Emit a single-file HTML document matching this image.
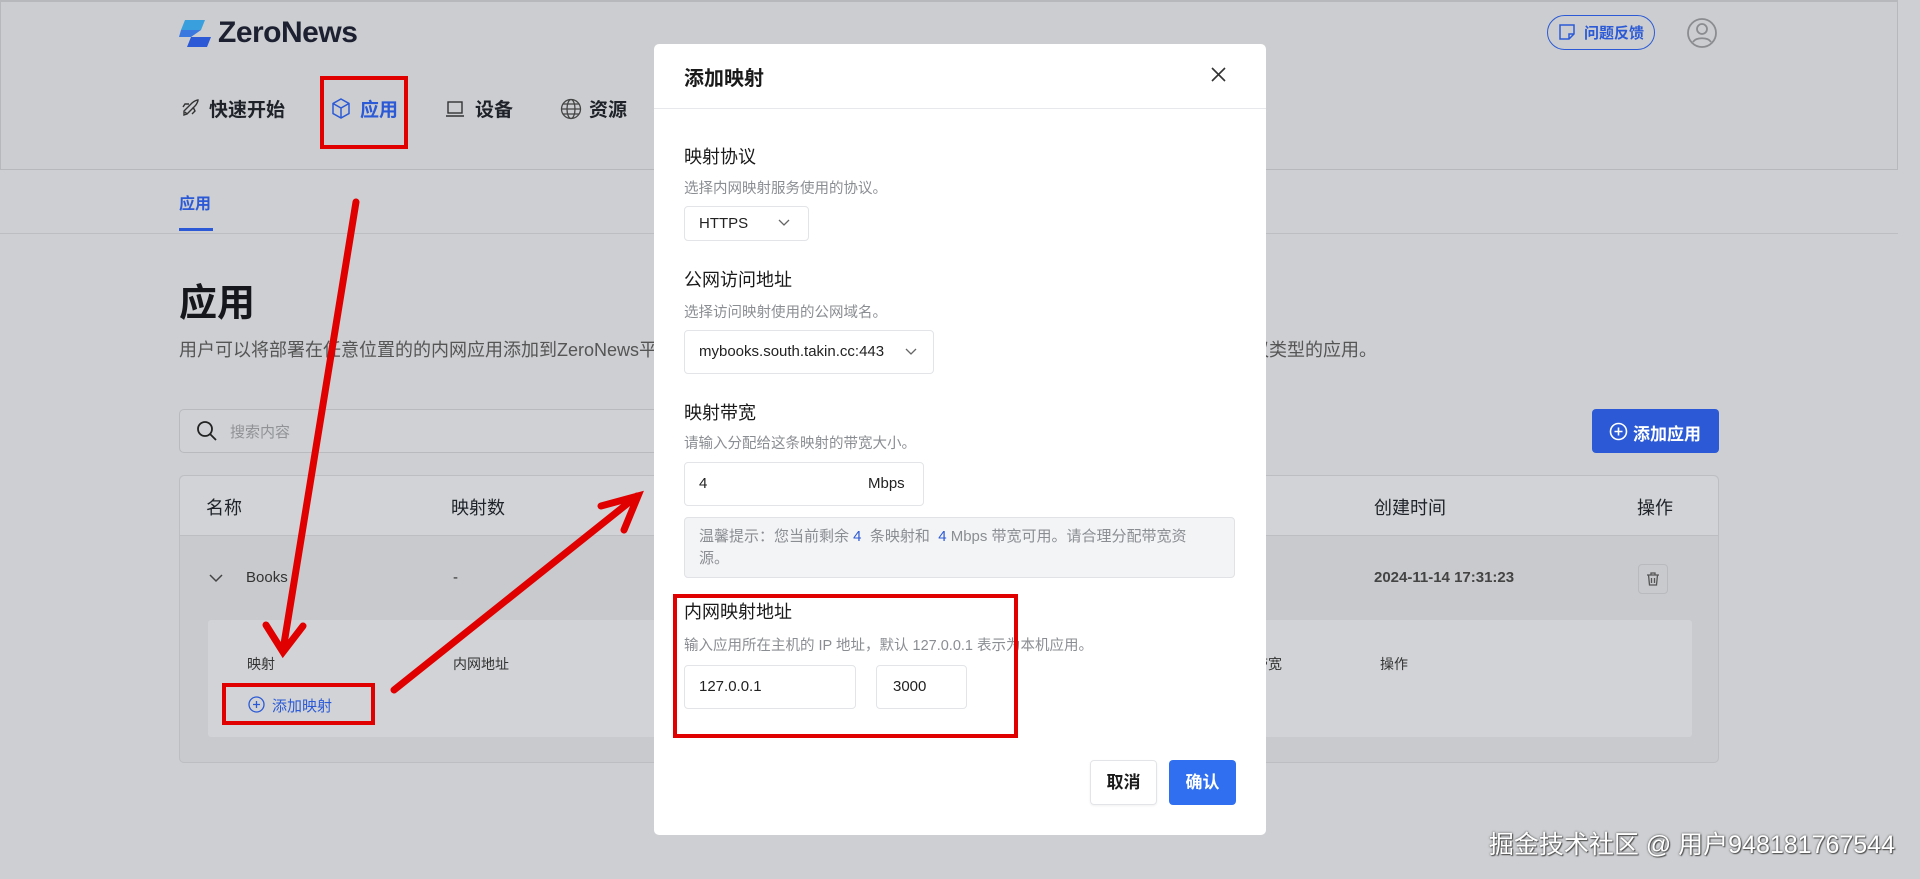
<!DOCTYPE html>
<html><head><meta charset="utf-8"><style>
*{margin:0;padding:0;box-sizing:border-box}
body{width:1920px;height:879px;overflow:hidden;position:relative;background:#cdcfd2;font-family:"Liberation Sans","Noto Sans CJK SC",sans-serif;color:#1f2329}
.a{position:absolute;white-space:nowrap}
</style></head><body>
<div class="a" style="left:0;top:0;width:1898px;height:170px;background:#cbcdd0;border:1px solid #b6b8bb;border-top:2px solid #b6b8bb"></div>
<div class="a" style="left:0;top:170px;width:1898px;height:64px;background:#cdcfd2;border-bottom:1px solid #bcbec1"></div>
<svg class="a" style="left:179px;top:20px" width="34" height="27" viewBox="0 0 34 27"><path d="M6 0h20l-4 10H2z" fill="#3aa0dd"/><path d="M12 17h20l-4 10H8z" fill="#2c5ad6"/><path d="M2 10h20l-10 7H0z" fill="#3a78e0"/></svg>
<div class="a" style="left:218px;top:16px;font-size:30px;font-weight:bold;color:#1c2030;letter-spacing:-0.5px">ZeroNews</div>
<svg class="a" style="left:181px;top:98px" width="20" height="20" viewBox="0 0 20 20" fill="none" stroke="#333" stroke-width="1.4"><path d="M3 17l3-1 8-8c2-2 3-5 3-6-1 0-4 1-6 3l-8 8z M6 16l-2-2 M12 9l2 4-3 3 M8 6l-4 0-2 3"/></svg>
<div class="a" style="left:209px;top:95px;font-size:19px;font-weight:bold">快速开始</div>
<svg class="a" style="left:331px;top:98px" width="20" height="22" viewBox="0 0 20 22" fill="none" stroke="#2c5ad6" stroke-width="1.5"><path d="M10 1l8 4.5v10L10 20l-8-4.5v-10z M2 5.5l8 4.5 8-4.5 M10 10v10"/></svg>
<div class="a" style="left:360px;top:95px;font-size:19px;font-weight:bold;color:#2c5ad6">应用</div>
<svg class="a" style="left:445px;top:100px" width="20" height="18" viewBox="0 0 20 18" fill="none" stroke="#333" stroke-width="1.4"><rect x="3" y="2" width="14" height="11"/><path d="M1 16h18"/></svg>
<div class="a" style="left:475px;top:95px;font-size:19px;font-weight:bold">设备</div>
<svg class="a" style="left:560px;top:98px" width="22" height="22" viewBox="0 0 22 22" fill="none" stroke="#444" stroke-width="1.3"><circle cx="11" cy="11" r="9.5"/><ellipse cx="11" cy="11" rx="4" ry="9.5"/><path d="M1.5 11h19M3 6h16M3 16h16"/></svg>
<div class="a" style="left:589px;top:95px;font-size:19px;font-weight:bold">资源</div>
<div class="a" style="left:320px;top:76px;width:88px;height:73px;border:4px solid #e00000"></div>
<div class="a" style="left:1547px;top:15px;width:108px;height:35px;border:1.5px solid #2c5ad6;border-radius:18px"></div>
<svg class="a" style="left:1558px;top:23px" width="18" height="18" viewBox="0 0 18 18" fill="none" stroke="#2c5ad6" stroke-width="1.5"><path d="M2 2h14v9l-5 5H2z M11 16v-5h5"/></svg>
<div class="a" style="left:1584px;top:22px;font-size:15px;font-weight:bold;color:#2c5ad6">问题反馈</div>
<svg class="a" style="left:1686px;top:17px" width="32" height="32" viewBox="0 0 32 32" fill="none" stroke="#8a8c90" stroke-width="1.8"><circle cx="16" cy="16" r="14"/><circle cx="16" cy="12" r="5"/><path d="M7 25c3-5 15-5 18 0"/></svg>
<div class="a" style="left:179px;top:190px;font-size:16px;font-weight:bold;color:#2c5ad6">应用</div>
<div class="a" style="left:179px;top:228px;width:34px;height:3px;background:#2c5ad6"></div>
<div class="a" style="left:179px;top:272px;font-size:38px;font-weight:bold;color:#15171c">应用</div>
<div class="a" style="left:179px;top:336px;font-size:18px;color:#555">用户可以将部署在任意位置的的内网应用添加到ZeroNews平台，……………………………………………………………………支持多种协议类型的应用。</div>
<div class="a" style="left:179px;top:409px;width:520px;height:44px;border:1px solid #b8babd;border-radius:5px;background:#cfd1d4"></div>
<svg class="a" style="left:196px;top:420px" width="22" height="22" viewBox="0 0 22 22" fill="none" stroke="#222" stroke-width="1.8"><circle cx="9" cy="9" r="7"/><path d="M14 14l6 6"/></svg>
<div class="a" style="left:230px;top:421px;font-size:15px;color:#909296">搜索内容</div>
<div class="a" style="left:1592px;top:409px;width:127px;height:44px;background:#2c5ad6;border-radius:4px"></div>
<svg class="a" style="left:1609px;top:422px" width="19" height="19" viewBox="0 0 19 19" fill="none" stroke="#fff" stroke-width="1.6"><circle cx="9.5" cy="9.5" r="8"/><path d="M9.5 5.5v8M5.5 9.5h8"/></svg>
<div class="a" style="left:1633px;top:420px;font-size:17px;font-weight:bold;color:#fff">添加应用</div>
<div class="a" style="left:179px;top:475px;width:1540px;height:288px;border:1px solid #bcbec1;border-radius:5px;background:#c8cacd"></div>
<div class="a" style="left:180px;top:476px;width:1538px;height:60px;background:#d1d3d6;border-bottom:1px solid #bcbec1;border-radius:5px 5px 0 0"></div>
<div class="a" style="left:206px;top:494px;font-size:18px">名称</div>
<div class="a" style="left:451px;top:494px;font-size:18px">映射数</div>
<div class="a" style="left:1374px;top:494px;font-size:18px">创建时间</div>
<div class="a" style="left:1637px;top:494px;font-size:18px">操作</div>
<svg class="a" style="left:209px;top:573px" width="14" height="10" viewBox="0 0 14 10" fill="none" stroke="#444" stroke-width="1.5"><path d="M1 2l6 6 6-6"/></svg>
<div class="a" style="left:246px;top:569px;font-size:15px;color:#333">Books</div>
<div class="a" style="left:453px;top:569px;font-size:15px;color:#333">-</div>
<div class="a" style="left:1374px;top:569px;font-size:15px;font-weight:bold;color:#444">2024-11-14 17:31:23</div>
<div class="a" style="left:1638px;top:564px;width:30px;height:30px;border:1px solid #b8babd;border-radius:4px"></div>
<svg class="a" style="left:1645px;top:571px" width="16" height="16" viewBox="0 0 16 16" fill="none" stroke="#555" stroke-width="1.3"><path d="M2 4h12M6 4V2h4v2M3.5 4l1 10h7l1-10M6.5 7v5M9.5 7v5"/></svg>
<div class="a" style="left:208px;top:620px;width:1484px;height:117px;background:#d1d3d6;border-radius:3px"></div>
<div class="a" style="left:247px;top:654px;font-size:14px;color:#333">映射</div>
<div class="a" style="left:453px;top:654px;font-size:14px;color:#333">内网地址</div>
<div class="a" style="left:1254px;top:654px;font-size:14px;color:#333">带宽</div>
<div class="a" style="left:1380px;top:654px;font-size:14px;color:#333">操作</div>
<svg class="a" style="left:248px;top:696px" width="17" height="17" viewBox="0 0 17 17" fill="none" stroke="#2c5ad6" stroke-width="1.3"><circle cx="8.5" cy="8.5" r="7.5"/><path d="M8.5 5v7M5 8.5h7"/></svg>
<div class="a" style="left:272px;top:695px;font-size:15px;color:#2c5ad6">添加映射</div>
<div class="a" style="left:222px;top:683px;width:153px;height:42px;border:4px solid #e00000"></div>
<svg class="a" style="left:0;top:0" width="1920" height="879"><g stroke="#e00000" stroke-width="7" stroke-linecap="round" fill="none"><path d="M356 202L283 650M266 625l17 27 20-26"/><path d="M394 690L637 496M601 506l37-10-14 34"/></g></svg>
<div class="a" style="left:654px;top:44px;width:612px;height:791px;background:#fff;border-radius:5px"></div>
<div class="a" style="left:654px;top:108px;width:612px;height:1px;background:#e6e8eb"></div>
<div class="a" style="left:684px;top:62px;font-size:20px;font-weight:bold;color:#1a1a1a">添加映射</div>
<svg class="a" style="left:1211px;top:67px" width="15" height="15" viewBox="0 0 15 15" stroke="#333" stroke-width="1.6"><path d="M1 1l13 13M14 1L1 14"/></svg>
<div class="a" style="left:684px;top:143px;font-size:18px;color:#1a1a1a">映射协议</div>
<div class="a" style="left:684px;top:177px;font-size:14.5px;color:#8a8d92">选择内网映射服务使用的协议。</div>
<div class="a" style="left:684px;top:206px;width:125px;height:35px;border:1px solid #e2e4e7;border-radius:4px"></div>
<div class="a" style="left:699px;top:215px;font-size:15px;color:#222">HTTPS</div>
<svg class="a" style="left:778px;top:219px" width="12" height="8" viewBox="0 0 12 8" fill="none" stroke="#666" stroke-width="1.3"><path d="M1 1l5 5 5-5"/></svg>
<div class="a" style="left:684px;top:266px;font-size:18px;color:#1a1a1a">公网访问地址</div>
<div class="a" style="left:684px;top:301px;font-size:14.5px;color:#8a8d92">选择访问映射使用的公网域名。</div>
<div class="a" style="left:684px;top:330px;width:250px;height:44px;border:1px solid #e2e4e7;border-radius:4px"></div>
<div class="a" style="left:699px;top:343px;font-size:15px;color:#222">mybooks.south.takin.cc:443</div>
<svg class="a" style="left:905px;top:348px" width="12" height="8" viewBox="0 0 12 8" fill="none" stroke="#666" stroke-width="1.3"><path d="M1 1l5 5 5-5"/></svg>
<div class="a" style="left:684px;top:399px;font-size:18px;color:#1a1a1a">映射带宽</div>
<div class="a" style="left:684px;top:432px;font-size:14.5px;color:#8a8d92">请输入分配给这条映射的带宽大小。</div>
<div class="a" style="left:684px;top:462px;width:240px;height:44px;border:1px solid #e2e4e7;border-radius:4px"></div>
<div class="a" style="left:699px;top:475px;font-size:15px;color:#222">4</div>
<div class="a" style="left:868px;top:475px;font-size:15px;color:#222">Mbps</div>
<div class="a" style="left:684px;top:517px;width:551px;height:61px;border:1px solid #e0e2e5;border-radius:4px;background:#f3f4f6"></div>
<div class="a" style="left:699px;top:526px;font-size:15px;color:#8a8d92;line-height:22px;white-space:normal;width:505px">温馨提示：您当前剩余 <span style="color:#2c5ad6">4</span> &nbsp;条映射和 &nbsp;<span style="color:#2c5ad6">4</span> Mbps 带宽可用。请合理分配带宽资源。</div>
<div class="a" style="left:684px;top:598px;font-size:18px;color:#1a1a1a">内网映射地址</div>
<div class="a" style="left:684px;top:634px;font-size:14.5px;color:#8a8d92">输入应用所在主机的 IP 地址，默认 127.0.0.1 表示为本机应用。</div>
<div class="a" style="left:684px;top:665px;width:172px;height:44px;border:1px solid #e2e4e7;border-radius:4px"></div>
<div class="a" style="left:699px;top:678px;font-size:15px;color:#222">127.0.0.1</div>
<div class="a" style="left:876px;top:665px;width:91px;height:44px;border:1px solid #e2e4e7;border-radius:4px"></div>
<div class="a" style="left:893px;top:678px;font-size:15px;color:#222">3000</div>
<div class="a" style="left:673px;top:594px;width:345px;height:144px;border:4px solid #e00000"></div>
<div class="a" style="left:1090px;top:760px;width:67px;height:45px;border:1px solid #e2e4e7;border-radius:4px;box-shadow:0 1px 2px rgba(0,0,0,.06);font-size:17px;font-weight:bold;color:#1a1a1a;line-height:43px;text-align:center">取消</div>
<div class="a" style="left:1169px;top:760px;width:67px;height:45px;background:#2f6ff0;border-radius:4px;font-size:17px;font-weight:bold;color:#fff;line-height:45px;text-align:center">确认</div>
<div class="a" style="right:25px;top:825px;font-size:25px;color:#fff;text-shadow:0 0 2px #444,1px 1px 1px #555">掘金技术社区 @ 用户948181767544</div>
</body></html>
